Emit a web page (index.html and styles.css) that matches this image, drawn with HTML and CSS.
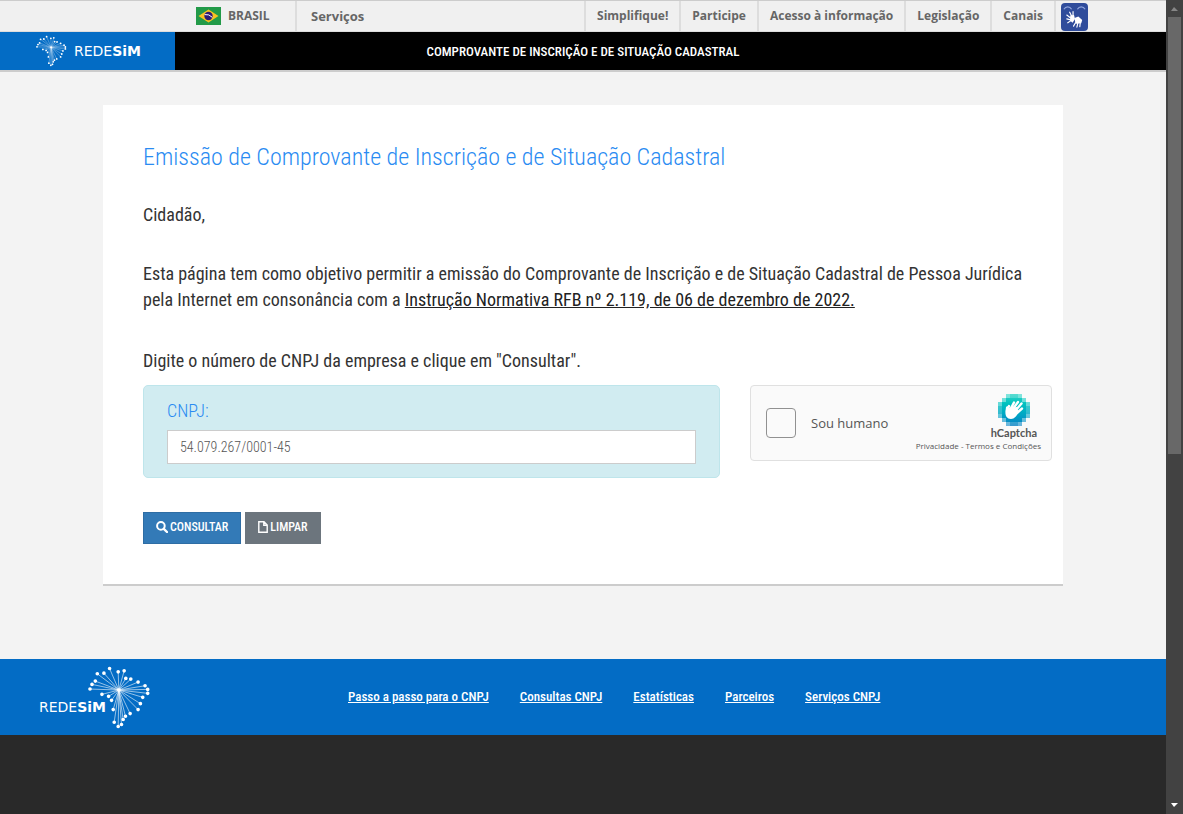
FILE: index.html
```html
<!DOCTYPE html>
<html lang="pt-BR">
<head>
<meta charset="utf-8">
<meta name="viewport" content="width=device-width, initial-scale=1">
<title>Emissão de Comprovante de Inscrição e de Situação Cadastral</title>
<link rel="stylesheet" href="styles.css">
</head>
<body>
<svg class="defs" aria-hidden="true">
  <symbol id="burst" viewBox="205 45 190 195">
    <g stroke="currentColor" stroke-width="2.5" fill="none" opacity=".7">
      <path d="M298 120L270 55M298 120L253 69M298 120L233 71M298 120L296 65M298 120L314 62M298 120L319 85M298 120L334 87M298 120L356 96M298 120L377 107M298 120L385 118M298 120L385 130M298 120L370 142M298 120L363 161M298 120L356 179M298 120L332 191M298 120L318 199M298 120L311 209M298 120L306 224M298 120L296 230M298 120L284 217M298 120L281 179M298 120L276 151M298 120L267 139M298 120L247 133M298 120L211 117M298 120L217 103M298 120L227 93"/>
    </g>
    <g stroke="currentColor" stroke-width="11" stroke-linecap="round">
      <path d="M270 55h.1M253 69h.1M233 71h.1M296 65h.1M314 62h.1M319 85h.1M334 87h.1M356 96h.1M377 107h.1M385 118h.1M385 130h.1M370 142h.1M363 161h.1M356 179h.1M332 191h.1M318 199h.1M311 209h.1M306 224h.1M296 230h.1M284 217h.1M281 179h.1M276 151h.1M267 139h.1M247 133h.1M211 117h.1M217 103h.1M227 93h.1M298 120h.1"/>
    </g>
  </symbol>
</svg>
<div class="window">
  <div class="page">
    <div class="govbar">
      <div class="gov-left">
        <a class="brasil" href="#">
          <svg class="flag" viewBox="0 0 25 18" aria-hidden="true">
            <rect width="25" height="18" fill="#229a48"/>
            <path d="M12.500 2.500L22.500 9L12.500 15.500L2.500 9z" fill="#f8c321"/>
            <circle cx="12.500" cy="9" r="4.200" fill="#2e1c75"/>
            <path d="M8.600 7.600Q13 6.800 16.300 10.300" stroke="#fff" fill="none"/>
          </svg>
          <span>BRASIL</span>
        </a>
        <a class="servicos" href="#">Serviços</a>
      </div>
      <nav class="gov-nav">
        <a href="#">Simplifique!</a><a href="#">Participe</a><a href="#">Acesso à informação</a><a href="#">Legislação</a><a href="#">Canais</a>
        <button class="vlibras" type="button" aria-label="VLibras">
          <svg viewBox="0 0 28 28" aria-hidden="true">
            <path d="M3 6C5 2.500 9 2.500 11 6M17 6C19 2.500 23 2.500 25 6" fill="none" stroke="#8fa4dc" stroke-width="1.300"/>
            <path d="M9 9L11 13M12.500 8.500L12.500 13M6 12L10 15M6 16L10 17M7 20L10 18" stroke="#fff" stroke-width="1.200" stroke-linecap="round"/>
            <path d="M9.500 12.500L13.500 12L14.500 16L12 20L9.500 18z" fill="#fff"/>
            <path d="M14 15L18 13.500L22 17L21 20.500L15 21z" fill="#fff"/>
            <path d="M15 20L13 23.500M17.500 20L16.500 24.500M20 20L19.500 24" stroke="#fff" stroke-width="1.200" stroke-linecap="round"/>
          </svg>
        </button>
      </nav>
    </div>
    <header class="header">
      <a class="brand" href="#"><svg class="brand-mark" aria-hidden="true"><use href="#burst"/></svg><span class="word">REDE<b>SiM</b></span></a>
      <p class="header-title">COMPROVANTE DE INSCRIÇÃO E DE SITUAÇÃO CADASTRAL</p>
    </header>
    <main class="main">
      <section class="card">
        <h1>Emissão de Comprovante de Inscrição e de Situação Cadastral</h1>
        <p class="greeting">Cidadão,</p>
        <p class="intro">Esta página tem como objetivo permitir a emissão do Comprovante de Inscrição e de Situação Cadastral de Pessoa Jurídica pela Internet em consonância com a <a href="#">Instrução Normativa RFB nº 2.119, de 06 de dezembro de 2022.</a></p>
        <p class="hint">Digite o número de CNPJ da empresa e clique em "Consultar".</p>
        <form>
          <div class="fields">
            <div class="cnpj">
              <label for="cnpj">CNPJ:</label>
              <input id="cnpj" type="text" value="54.079.267/0001-45">
            </div>
            <div class="captcha">
              <input id="human" type="checkbox">
              <label for="human">Sou humano</label>
              <div class="captcha-brand">
                <svg class="captcha-logo" viewBox="0 0 32 32" shape-rendering="crispEdges" aria-hidden="true">
                  <defs><linearGradient id="teal" x1="0" y1="0" x2="0" y2="1"><stop offset="0" stop-color="#2fd4c6"/><stop offset=".3" stop-color="#00c2bf"/><stop offset=".65" stop-color="#00a5c5"/><stop offset="1" stop-color="#087fc4"/></linearGradient></defs>
                  <path d="M8 0H24V4H28V8H32V24H28V28H24V32H8V28H4V24H0V8H4V4H8z" fill="url(#teal)"/>
                  <path d="M8 0h4v4h-4zM20 0h4v4h-4zM4 4h4v4h-4zM24 4h4v4h-4zM0 8h4v4h-4zM28 8h4v4h-4zM0 20h4v4h-4zM28 20h4v4h-4zM4 24h4v4h-4zM24 24h4v4h-4zM8 28h4v4h-4zM20 28h4v4h-4z" fill="#fff" opacity=".4"/>
                  <path d="M12 0h8v4h-8zM0 12h4v8h-4zM28 12h4v8h-4zM12 28h8v4h-8z" fill="#fff" opacity=".2"/>
                  <g shape-rendering="auto"><path d="M9 17L11 12M12 16L16 8.500M15 15L20 8M18 16L23.500 9.500M19 19L24 14.500" stroke="#fff" stroke-width="2.400" stroke-linecap="round"/>
                  <path d="M8 13C9 11.500 10.500 12 10.500 14L19 13L20.500 18C19 21.500 17 25 13 25C8.500 25 7 21.500 7.500 17z" fill="#fff"/></g>
                </svg>
                <strong>hCaptcha</strong>
                <small><a href="#">Privacidade</a> - <a href="#">Termos e Condições</a></small>
              </div>
            </div>
          </div>
          <div class="actions">
            <button class="btn primary" type="submit"><svg viewBox="0 0 12 12" aria-hidden="true"><circle cx="4.900" cy="4.900" r="3.800" fill="none" stroke="currentColor" stroke-width="2"/><path d="M7.800 7.800L11 11" stroke="currentColor" stroke-width="2.400" stroke-linecap="round"/></svg>CONSULTAR</button>
            <button class="btn secondary" type="reset"><svg class="file" viewBox="0 0 10 12" aria-hidden="true"><path d="M.800 .800H6L9.200 4V11.200H.800zM5.800 1V4.300H9" fill="none" stroke="currentColor" stroke-width="1.400"/></svg>LIMPAR</button>
          </div>
        </form>
      </section>
    </main>
    <footer class="footer">
      <a class="footer-brand" href="#"><span class="word">REDE<b>SiM</b></span><svg class="footer-mark" aria-hidden="true"><use href="#burst"/></svg></a>
      <nav class="footer-nav">
        <a href="#">Passo a passo para o CNPJ</a><a href="#">Consultas CNPJ</a><a href="#">Estatísticas</a><a href="#">Parceiros</a><a href="#">Serviços CNPJ</a>
      </nav>
    </footer>
  </div>
  <div class="scrollbar" aria-hidden="true"><i class="up"></i><i class="track"><i class="thumb"></i></i><i class="down"></i></div>
</div>
</body>
</html>
```
FILE: styles.css
```css
* { box-sizing: border-box; }
body {
  margin: 0;
  background: #292929;
  color: #333;
  font-family: "Roboto Condensed", "Liberation Sans Narrow", Roboto, sans-serif;
  font-size: 18px;
  line-height: 26px;
}
p, h1 { margin: 0; }
.defs { position: absolute; width: 0; height: 0; }
.window { display: flex; min-height: 100vh; }
.page { flex: 1; min-width: 0; }

.govbar {
  display: flex;
  justify-content: space-between;
  height: 32px;
  padding: 0 78px 0 196px;
  background: #f0f0f0;
  border-top: 1px solid #ccc;
  border-bottom: 1px solid #ddd;
  font: 700 12px/30px "Open Sans", "Noto Sans", sans-serif;
}
.govbar a { color: #666; text-decoration: none; white-space: nowrap; }
.gov-left, .gov-nav { display: flex; }
.brasil { display: flex; align-items: center; gap: 7px; width: 99px; }
.flag { width: 25px; height: 18px; }
.servicos { padding-left: 14px; border-left: 2px solid #ddd; font-size: 13px; }
.gov-nav a { padding: 0 11px; border-left: 2px solid #ddd; }
.vlibras {
  width: 34px;
  padding: 1px 0 0 5px;
  border: 0;
  border-left: 2px solid #ddd;
  background: none;
}
.vlibras svg { display: block; width: 27px; height: 28px; border-radius: 4px; background: #2f4c9b; }

.header {
  display: grid;
  grid-template-columns: 175px 1fr 175px;
  height: 40px;
  background: #000;
  border-bottom: 2px solid #ccc;
  color: #fff;
}
.brand {
  display: flex;
  align-items: center;
  gap: 7px;
  height: 38px;
  padding-left: 36px;
  background: #036cc5;
  color: #fff;
  text-decoration: none;
}
.brand-mark { width: 31px; height: 32px; }
.word { font: 14px/16px "DejaVu Sans", sans-serif; }
.header-title { font-size: 13px; line-height: 40px; height: 38px; text-align: center; white-space: nowrap; font-weight: 500; }

.main { padding: 33px 16px 73px; background: #f3f3f3; }
.card {
  max-width: 960px;
  margin: 0 auto;
  padding: 39px 11px 40px 40px;
  background: #fff;
  border-bottom: 2px solid #ccc;
}
h1 { color: #2a8bf2; font-size: 24px; line-height: 26px; font-weight: 300; }
.greeting { margin-top: 32px; }
.intro { margin-top: 33px; padding-right: 29px; }
.intro a { color: #222; }
.hint { margin-top: 35px; }
.fields { display: grid; grid-template-columns: 1fr 302px; gap: 30px; align-items: start; margin-top: 11px; }
.cnpj {
  display: flex;
  flex-direction: column;
  gap: 6px;
  padding: 12px 23px 13px;
  background: #d1ecf1;
  border: 1px solid #bee5eb;
  border-radius: 5px;
}
.cnpj label { color: #2a8bf2; font-weight: 300; }
.cnpj input {
  width: 100%;
  height: 34px;
  padding: 0 12px;
  border: 1px solid #ccc;
  background: #fff;
  color: #555;
  font: 300 14px/20px "Roboto Condensed", "Liberation Sans Narrow", Roboto, sans-serif;
}
.captcha {
  display: flex;
  align-items: center;
  height: 76px;
  padding: 0 10px 0 15px;
  background: #fafafa;
  border: 1px solid #e0e0e0;
  border-radius: 4px;
  color: #555;
  font-family: "Open Sans", "Noto Sans", sans-serif;
}
.captcha input {
  appearance: none;
  width: 30px;
  height: 30px;
  margin: 0 15px 0 0;
  border: 1px solid #919191;
  border-radius: 4px;
  background: #fafafa;
}
.captcha label { flex: 1; font-size: 13px; white-space: nowrap; }
.captcha-brand { display: flex; flex-direction: column; align-items: flex-end; white-space: nowrap; }
.captcha-logo { width: 32px; height: 32px; margin-right: 11px; }
.captcha strong { margin-right: 4px; font: bold 11px/14px Lato, sans-serif; color: #555; }
.captcha small { font-size: 8px; line-height: 12px; }
.captcha small a { color: inherit; text-decoration: none; }
.actions { display: flex; gap: 4px; margin-top: 34px; }
.btn {
  display: flex;
  align-items: center;
  gap: 2px;
  height: 32px;
  padding: 0 12px 2px;
  border: 1px solid;
  color: #fff;
  font: 500 12px/18px "Roboto Condensed", "Liberation Sans Narrow", Roboto, sans-serif;
}
.btn svg { width: 12px; height: 12px; }
.btn .file { width: 10px; }
.primary { background: #337ab7; border-color: #2e6da4; }
.secondary { background: #6c757d; border-color: #6c757d; }

.footer {
  display: flex;
  align-items: center;
  height: 76px;
  padding-left: 39px;
  background: #036cc5;
}
.footer-brand { position: relative; display: flex; align-items: center; width: 309px; height: 76px; padding-top: 20px; color: #fff; text-decoration: none; }
.footer-mark { position: absolute; left: 49px; top: 6px; width: 63px; height: 65px; }
.footer-nav { display: flex; gap: 31px; font-size: 13px; line-height: 20px; font-weight: 500; white-space: nowrap; }
.footer-nav a { color: #fff; }

.scrollbar { display: flex; flex-direction: column; justify-content: space-between; width: 17px; background: #424242; }
.track { flex: 1; margin: 0 2px; }
.thumb { display: block; height: 56%; background: #686868; }
.up, .down { height: 17px; background: #868686; clip-path: polygon(5px 11px, 12px 11px, 8px 7px); }
.down { background: #fff; clip-path: polygon(5px 6px, 12px 6px, 8px 10px); }
```
